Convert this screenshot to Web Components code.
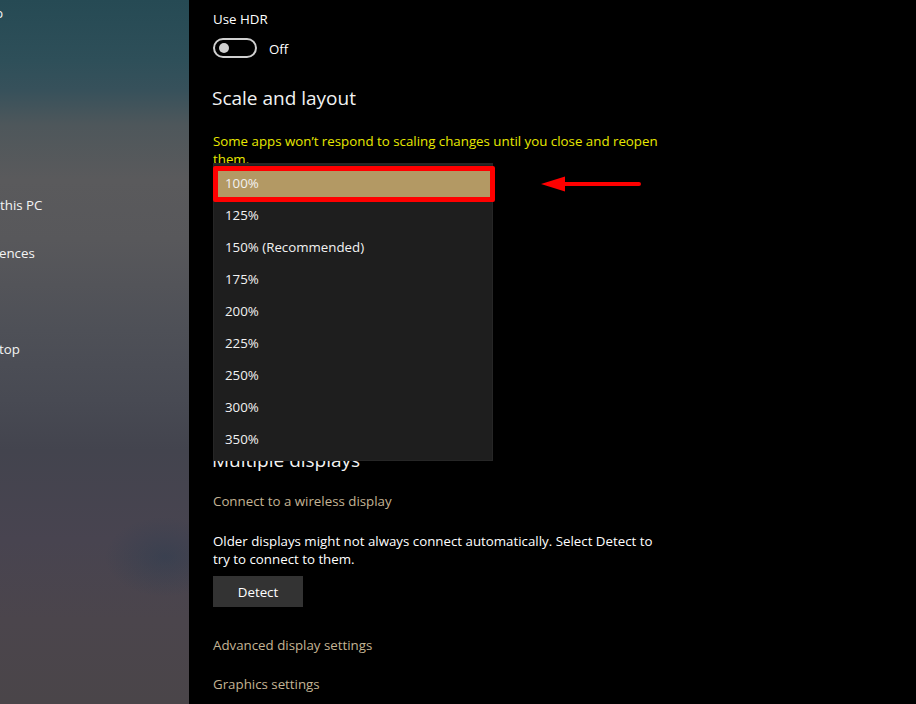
<!DOCTYPE html>
<html>
<head>
<meta charset="utf-8">
<title>Display settings</title>
<style>
	html, body { margin: 0; padding: 0; height: 100%; background: #000; }
	body { font-family: "Open Sans", "Noto Sans", sans-serif; font-size: 13.3px; color: #fff; overflow: hidden; }
</style>
</head>
<body>
<settings-page>
	<side-pane slot="side">
		<side-item style="--top:4px; --cut:-5px">p</side-item>
		<side-item style="--top:173px">this PC</side-item>
		<side-item style="--top:29px; --cut:-1px">ences</side-item>
		<side-item style="--top:77px; --cut:-1px">top</side-item>
	</side-pane>
	<main-pane slot="main">
		<setting-text style="--top:10px">Use HDR</setting-text>
		<toggle-switch label="Off"></toggle-switch>
		<section-heading style="--top:26px">Scale and layout</section-heading>
		<setting-text style="--top:20px; --color:#e8e800">Some apps won’t respond to scaling changes until you close and reopen them.</setting-text>
		<scale-dropdown>
			<scale-option selected>100%</scale-option>
			<scale-option>125%</scale-option>
			<scale-option>150% (Recommended)</scale-option>
			<scale-option>175%</scale-option>
			<scale-option>200%</scale-option>
			<scale-option>225%</scale-option>
			<scale-option>250%</scale-option>
			<scale-option>300%</scale-option>
			<scale-option>350%</scale-option>
		</scale-dropdown>
		<section-heading style="--top:278px">Multiple displays</section-heading>
		<setting-link style="--top:17px">Connect to a wireless display</setting-link>
		<setting-text style="--top:21px">Older displays might not always connect automatically. Select Detect to try to connect to them.</setting-text>
		<detect-button>Detect</detect-button>
		<setting-link style="--top:28px">Advanced display settings</setting-link>
		<setting-link style="--top:19px">Graphics settings</setting-link>
	</main-pane>
</settings-page>

<script>
function shadow(el, html) {
	el.attachShadow({ mode: 'open' }).innerHTML = html;
}

class settingsPage extends HTMLElement {
	constructor() {
		super();
		shadow(this, `
			<style>
				:host { display: grid; grid-template-columns: 189px 1fr; height: 704px; overflow: hidden; }
			</style>
			<slot name="side"></slot>
			<slot name="main"></slot>
		`);
	}
}
customElements.define('settings-page', settingsPage);

class sidePane extends HTMLElement {
	constructor() {
		super();
		shadow(this, `
			<style>
				:host {
					display: flex;
					flex-direction: column;
					height: 704px;
					overflow: hidden;
					background:
						radial-gradient(ellipse 60px 40px at 165px 557px, rgba(44, 60, 80, .5), rgba(44, 60, 80, 0)),
						linear-gradient(180deg, #264a54 0, #2e4f59 60px, #37515b 90px, #4e575b 125px, #5a5a5c 180px, #58585b 240px, #4e5057 330px, #484a53 400px, #43444e 450px, #484450 540px, #4b454c 620px, #4a4549 704px);
				}
			</style>
			<slot></slot>
		`);
	}
}
customElements.define('side-pane', sidePane);

class sideItem extends HTMLElement {
	constructor() {
		super();
		shadow(this, `
			<style>
				:host { display: block; margin-top: var(--top, 0); margin-left: var(--cut, 0); line-height: 19px; font-size: 13.3px; white-space: nowrap; color: #f4f4f4; }
			</style>
			<slot></slot>
		`);
	}
}
customElements.define('side-item', sideItem);

class mainPane extends HTMLElement {
	constructor() {
		super();
		shadow(this, `
			<style>
				:host { display: flex; flex-direction: column; align-items: flex-start; padding-left: 24px; background: #000; height: 704px; }
			</style>
			<slot></slot>
		`);
	}
}
customElements.define('main-pane', mainPane);

class settingText extends HTMLElement {
	constructor() {
		super();
		shadow(this, `
			<style>
				:host { display: block; width: 452px; margin-top: var(--top, 0); font-size: 13.3px; line-height: 18px; color: var(--color, #fff); }
			</style>
			<slot></slot>
		`);
	}
}
customElements.define('setting-text', settingText);

class settingLink extends HTMLElement {
	constructor() {
		super();
		shadow(this, `
			<style>
				:host { display: block; margin-top: var(--top, 0); font-size: 13.3px; line-height: 20px; color: #c4b494; }
			</style>
			<slot></slot>
		`);
	}
}
customElements.define('setting-link', settingLink);

class sectionHeading extends HTMLElement {
	constructor() {
		super();
		shadow(this, `
			<style>
				:host { display: block; margin-top: var(--top, 0); font-size: 19px; line-height: 28px; color: #f2f2f2; margin-left: -1px; }
			</style>
			<slot></slot>
		`);
	}
}
customElements.define('section-heading', sectionHeading);

class toggleSwitch extends HTMLElement {
	constructor() {
		super();
		shadow(this, `
			<style>
				:host { display: flex; align-items: center; gap: 12px; margin-top: 10px; font-size: 13.3px; line-height: 20px; }
				.track { box-sizing: border-box; width: 44px; height: 20px; border: 2px solid #cfcfcf; border-radius: 10px; display: flex; align-items: center; padding-left: 4px; }
				.knob { width: 10px; height: 10px; border-radius: 50%; background: #cfcfcf; }
				.label { line-height: 18px; padding-top: 2px; }
			</style>
			<div class="track"><div class="knob"></div></div>
			<span class="label"></span>
		`);
	}
	connectedCallback() {
		this.shadowRoot.querySelector('.label').textContent = this.getAttribute('label');
	}
}
customElements.define('toggle-switch', toggleSwitch);

class scaleDropdown extends HTMLElement {
	constructor() {
		super();
		shadow(this, `
			<style>
				/* the open list lies over the page, so it takes no room in the flow */
				:host { display: block; position: relative; width: 0; height: 0; z-index: 5; }
				.list { position: absolute; left: 0; top: -5px; box-sizing: border-box; width: 280px; padding: 2px 0 5px; background: #1e1e1e; border: 1px solid #262626; border-top-width: 2px; display: flex; flex-direction: column; }
				.arrow { position: absolute; left: 328px; top: 8px; }
			</style>
			<div class="list"><slot></slot></div>
			<svg class="arrow" width="100" height="16" viewBox="0 0 100 16">
				<path d="M0 8 L24 0.500 L24 6 L98 6 A2 2 0 0 1 98 10 L24 10 L24 15.500 Z" fill="#ff0000"/>
			</svg>
		`);
	}
}
customElements.define('scale-dropdown', scaleDropdown);

class scaleOption extends HTMLElement {
	constructor() {
		super();
		shadow(this, `
			<style>
				:host { display: flex; align-items: center; position: relative; height: 32px; padding-left: 11px; font-size: 13.3px; color: #f2f2f2; }
				.mark { display: none; position: absolute; left: -1px; top: -1px; box-sizing: border-box; width: 282px; height: 36px; background: #b39964; border: 5px solid #ff0000; border-radius: 2px; }
				:host([selected]) .mark { display: block; }
				.text { position: relative; }
			</style>
			<div class="mark"></div>
			<span class="text"><slot></slot></span>
		`);
	}
}
customElements.define('scale-option', scaleOption);

class detectButton extends HTMLElement {
	constructor() {
		super();
		shadow(this, `
			<style>
				:host { display: flex; align-items: center; justify-content: center; width: 90px; height: 31px; margin-top: 8px; background: #333; font-size: 13.3px; color: #fff; }
			</style>
			<slot></slot>
		`);
	}
}
customElements.define('detect-button', detectButton);
</script>
</body>
</html>
